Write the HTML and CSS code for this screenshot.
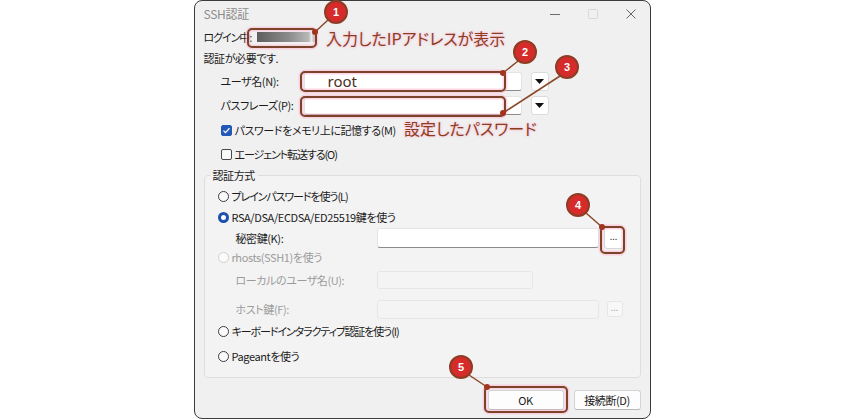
FILE: index.html
```html
<!DOCTYPE html>
<html lang="ja">
<head>
    <meta charset="UTF-8">
    <title>SSH認証</title>
    <link rel="stylesheet" href="styles.css">
</head>
<body>
    <div class="page">
        <div class="dialog">
            <div class="titlebar">
                <span class="title">SSH認証</span>
                <div class="win-ctrls">
                    <span class="ctrl"><svg width="10" height="10" viewBox="0 0 10 10"><path d="M0 5.5h10" stroke="#6e6e6e" stroke-width="1"/></svg></span>
                    <span class="ctrl"><svg width="10" height="10" viewBox="0 0 10 10"><rect x="0.5" y="0.5" width="9" height="9" rx="1" fill="none" stroke="#d8d8d8"/></svg></span>
                    <span class="ctrl"><svg width="10" height="10" viewBox="0 0 10 10"><path d="M0.5 0.5l9 9M9.5 0.5l-9 9" stroke="#666" stroke-width="1"/></svg></span>
                </div>
            </div>
            <div class="dlg-body">
                <div class="line login-row">
                    <span class="tight">ログイン中:</span>
                    <span class="host-bar"></span>
                </div>
                <div class="line">認証が必要です.</div>
                <div class="field-row">
                    <label class="field-label">ユーザ名(N):</label>
                    <span class="text-input combo-input"><span class="typed">root</span></span>
                    <span class="drop-btn"><svg width="9" height="5" viewBox="0 0 9 5"><path d="M0 0h9L4.5 5z" fill="#111"/></svg></span>
                </div>
                <div class="field-row pass-row">
                    <label class="field-label">パスフレーズ(P):</label>
                    <span class="text-input combo-input"></span>
                    <span class="drop-btn"><svg width="9" height="5" viewBox="0 0 9 5"><path d="M0 0h9L4.5 5z" fill="#111"/></svg></span>
                </div>
                <div class="check-row first-check">
                    <span class="checkbox checked"><svg width="9" height="9" viewBox="0 0 9 9"><path d="M1.5 4.6l2 2 4-4.4" fill="none" stroke="#fff" stroke-width="1.3"/></svg></span>
                    <span>パスワードをメモリ上に記憶する(M)</span>
                </div>
                <div class="check-row">
                    <span class="checkbox"></span>
                    <span class="tight">エージェント転送する(O)</span>
                </div>

                <fieldset class="group">
                    <legend>認証方式</legend>
                    <div class="radio-row r-plain"><span class="radio"></span><span class="tight">プレインパスワードを使う(L)</span></div>
                    <div class="radio-row r-rsa"><span class="radio on"></span><span>RSA/DSA/ECDSA/ED25519鍵を使う</span></div>
                    <div class="sub-row key-row">
                        <span class="sub-label">秘密鍵(K):</span>
                        <span class="text-input key-input"></span>
                        <span class="dots-btn">...</span>
                    </div>
                    <div class="radio-row r-rhosts disabled"><span class="radio"></span><span>rhosts(SSH1)を使う</span></div>
                    <div class="sub-row local-row disabled">
                        <span class="sub-label">ローカルのユーザ名(U):</span>
                        <span class="text-input off local-input"></span>
                    </div>
                    <div class="sub-row host-row disabled">
                        <span class="sub-label">ホスト鍵(F):</span>
                        <span class="text-input off key-input"></span>
                        <span class="dots-btn small">...</span>
                    </div>
                    <div class="radio-row r-kbd"><span class="radio"></span><span class="tight">キーボードインタラクティブ認証を使う(I)</span></div>
                    <div class="radio-row r-pageant"><span class="radio"></span><span>Pageantを使う</span></div>
                </fieldset>

                <div class="button-row">
                    <span class="btn btn-ok">OK</span>
                    <span class="btn btn-cut">接続断(D)</span>
                </div>
            </div>
        </div>

        <!-- annotations drawn on top of the screenshot -->
        <svg class="marks" width="844" height="420" viewBox="0 0 844 420">
            <g fill="none" stroke="#ffb6d2" stroke-width="5" opacity="0.55">
                <rect x="248" y="29" width="68" height="18" rx="4"/>
                <rect x="301" y="72" width="204" height="19" rx="4"/>
                <rect x="301" y="97" width="204" height="19" rx="4"/>
                <rect x="601" y="227" width="23" height="26" rx="4"/>
                <rect x="485" y="387" width="82" height="25" rx="4"/>
            </g>
            <g fill="none" stroke="#7a4428" stroke-width="2">
                <rect x="248" y="29" width="68" height="18" rx="4"/>
                <rect x="301" y="72" width="204" height="19" rx="4"/>
                <rect x="301" y="97" width="204" height="19" rx="4"/>
                <rect x="601" y="227" width="23" height="26" rx="4"/>
                <rect x="485" y="387" width="82" height="25" rx="4"/>
            </g>
            <g stroke="#8a4a2a" stroke-width="1.5">
                <path d="M328 20L315 32"/>
                <path d="M518 61L503 73"/>
                <path d="M560 76L503 113"/>
                <path d="M586 213L602 227"/>
                <path d="M469 375L487 387"/>
            </g>
            <g fill="#a2331f">
                <circle cx="315" cy="32" r="3"/>
                <circle cx="503" cy="73" r="3"/>
                <circle cx="503" cy="113" r="3"/>
                <circle cx="602" cy="227" r="3"/>
                <circle cx="487" cy="387" r="3"/>
            </g>
            <g fill="#d52b2b" stroke="#8c3d24" stroke-width="2">
                <circle cx="336" cy="12" r="11"/>
                <circle cx="525" cy="52" r="11"/>
                <circle cx="567" cy="67" r="11"/>
                <circle cx="578" cy="205" r="11"/>
                <circle cx="461" cy="367" r="11"/>
            </g>
            <g class="num" fill="#fff" text-anchor="middle">
                <text x="336" y="16">1</text>
                <text x="525" y="56">2</text>
                <text x="567" y="71">3</text>
                <text x="578" y="209">4</text>
                <text x="461" y="371">5</text>
            </g>
        </svg>
        <span class="note note-ip">入力したIPアドレスが表示</span>
        <span class="note note-pass">設定したパスワード</span>
    </div>
</body>
</html>
```

FILE: styles.css
```css
body {
    margin: 0;
    background: #ffffff;
    font-family: "Noto Sans CJK JP", "Noto Sans", sans-serif;
    font-size: 11px;
    letter-spacing: -0.4px;
    color: #1b1b1b;
    font-feature-settings: "palt";
}

.page {
    position: relative;
    width: 844px;
    height: 420px;
    display: flex;
    justify-content: center;
}

.dialog {
    width: 457px;
    height: 419px;
    box-sizing: border-box;
    border: 1px solid #3c3c3c;
    border-radius: 8px;
    background: #f0f0f0;
    overflow: hidden;
}

/* title bar */
.titlebar {
    height: 25px;
    display: flex;
    align-items: center;
    justify-content: space-between;
}
.title {
    padding-left: 9px;
    color: #8c8c8c;
    font-size: 12px;
    letter-spacing: -0.3px;
}
.win-ctrls {
    display: flex;
}
.ctrl {
    width: 38px;
    height: 25px;
    display: flex;
    align-items: center;
    justify-content: center;
}

.dlg-body {
    padding: 0 9px;
}

.line {
    height: 18px;
    line-height: 18px;
    margin-top: 3px;
}
.login-row {
    margin-top: 2px;
    display: flex;
    align-items: center;
}
.host-bar {
    width: 59px;
    height: 10px;
    margin-left: 6px;
    background: linear-gradient(90deg, #5e5e5e 0%, #8c8c8c 55%, #b9b9b9 88%, #efefef 92%, #9a9a9a 100%);
}

.tight {
    letter-spacing: -1.1px;
}

/* user / passphrase */
.field-row {
    height: 22px;
    margin-top: 3px;
    display: flex;
    align-items: center;
}
.pass-row {
    margin-top: 2px;
}
.field-label {
    width: 80px;
    margin-left: 17px;
    white-space: nowrap;
}
.text-input {
    display: block;
    height: 19px;
    box-sizing: border-box;
    background: #fff;
    border: 1px solid #e4e4e4;
    border-bottom-color: #8b8b8b;
    border-radius: 3px;
}
.combo-input {
    width: 218px;
    margin-left: 3px;
}
.typed {
    display: block;
    padding-left: 23px;
    font-family: "Noto Sans", sans-serif;
    font-size: 15px;
    letter-spacing: 0;
    line-height: 16px;
    color: #4a2e20;
}
.drop-btn {
    width: 18px;
    height: 19px;
    margin-left: 9px;
    box-sizing: border-box;
    background: #fff;
    border: 1px solid #dcdcdc;
    border-radius: 3px;
    display: flex;
    align-items: center;
    justify-content: center;
}

/* checkboxes */
.check-row {
    height: 18px;
    margin-top: 6px;
    margin-left: 17px;
    display: flex;
    align-items: center;
    gap: 3px;
}
.first-check {
    margin-top: 5px;
}
.checkbox {
    width: 11px;
    height: 11px;
    box-sizing: border-box;
    border: 1px solid #4a4a4a;
    border-radius: 2px;
    background: #fafafa;
    display: flex;
    align-items: center;
    justify-content: center;
}
.checkbox.checked {
    background: #2357b8;
    border-color: #2357b8;
}

/* auth method group */
.group {
    margin: 3px 0 0;
    padding: 0 0 13px;
    border: 1px solid #dedede;
    border-radius: 4px;
    background: #f3f3f3;
}
.group legend {
    margin-left: 5px;
    padding: 0 3px;
    height: 18px;
    line-height: 18px;
}
.radio-row {
    height: 16px;
    margin-left: 13px;
    display: flex;
    align-items: center;
    gap: 3px;
}
.radio {
    width: 11px;
    height: 11px;
    box-sizing: border-box;
    border: 1px solid #3e3e3e;
    border-radius: 50%;
    background: #fbfbfb;
}
.radio.on {
    border: 3.5px solid #1e50ad;
    background: #fff;
}
.disabled {
    color: #9b9b9b;
}
.disabled .radio {
    border-color: #cfcfcf;
}
.r-plain { margin-top: 4px; }
.r-rsa { margin-top: 5px; }
.r-kbd { margin-top: 3px; }
.r-pageant { margin-top: 9px; }

.sub-row {
    height: 22px;
    margin-left: 31px;
    display: flex;
    align-items: center;
}
.key-row { margin-top: 2px; }
.local-row { margin-top: 5px; height: 20px; }
.host-row { margin-top: 8px; }
.sub-label {
    width: 141px;
}
.key-input {
    width: 222px;
    height: 20px;
}
.local-input {
    width: 156px;
    height: 18px;
}
.text-input.off {
    background: #f4f4f4;
    border-color: #e6e6e6;
}
.host-row .key-input {
    height: 19px;
}
.dots-btn {
    width: 20px;
    height: 22px;
    margin-left: 5px;
    box-sizing: border-box;
    background: #fff;
    border: 1px solid #d6d6d6;
    border-radius: 3px;
    font-size: 9px;
    letter-spacing: 0;
    line-height: 18px;
    text-align: center;
    color: #333;
}
.dots-btn.small {
    width: 16px;
    height: 16px;
    margin-left: 8px;
    line-height: 12px;
    background: #f8f8f8;
    border-color: #e6e6e6;
    color: #aaa;
}

/* bottom buttons */
.button-row {
    margin-top: 12px;
    display: flex;
    justify-content: flex-end;
    gap: 10px;
}
.btn {
    height: 20px;
    box-sizing: border-box;
    background: #fdfdfd;
    border: 1px solid #d4d4d4;
    border-bottom-color: #b8b8b8;
    border-radius: 3px;
    text-align: center;
    line-height: 18px;
}
.btn-ok { width: 76px; }
.btn-cut { width: 67px; }

/* annotation layer */
.marks {
    position: absolute;
    left: 0;
    top: 0;
}
.num text {
    font-family: "Liberation Sans", sans-serif;
    font-size: 11px;
    font-weight: bold;
    letter-spacing: 0;
}
.note {
    position: absolute;
    font-size: 16px;
    letter-spacing: 0;
    line-height: 18px;
    color: #8a4020;
    text-shadow: 0 0 3px #ffb8d4, 0 0 2px #ffc8dc;
}
.note-ip {
    left: 326px;
    top: 29px;
}
.note-pass {
    left: 404px;
    top: 119px;
}
```
